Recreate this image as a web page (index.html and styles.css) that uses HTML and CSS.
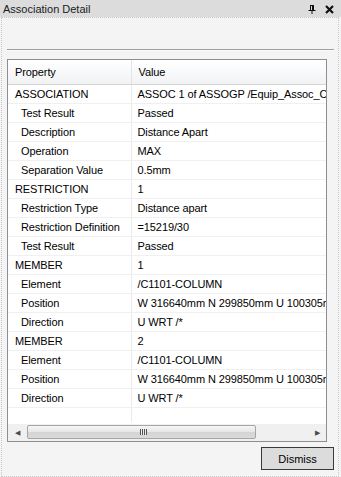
FILE: index.html
```html
<!DOCTYPE html>
<html lang="en">
<head>
    <meta charset="UTF-8">
    <meta name="viewport" content="width=device-width, initial-scale=1.0">
    <title>Association Detail</title>
    <link rel="stylesheet" href="styles.css">
</head>
<body>
    <div class="dock">
        <div class="titlebar">
            <span class="title">Association Detail</span>
            <span class="tools">
                <!-- pin -->
                <svg width="8" height="9" viewBox="0 0 8 9">
                    <path d="M2 0.5h4M2.5 0.5v5M5.5 0.5v5M4.5 0.5v5M0.5 5.5h7M4 5.5v3.5" stroke="#111" stroke-width="1" fill="none"/>
                </svg>
                <!-- close -->
                <svg width="9" height="9" viewBox="0 0 9 9">
                    <path d="M1 1L8 8M8 1L1 8" stroke="#111" stroke-width="2.2" fill="none"/>
                </svg>
            </span>
        </div>

        <div class="panel">
            <div class="spacer"></div>
            <div class="divider"></div>

            <div class="grid">
                <div class="grid-body">
                    <table class="props">
                        <colgroup>
                            <col class="col-prop">
                            <col class="col-value">
                        </colgroup>
                        <thead>
                            <tr><th>Property</th><th>Value</th></tr>
                        </thead>
                        <tbody>
                            <tr><td>ASSOCIATION</td><td>ASSOC 1 of ASSOGP /Equip_Assoc_Clearance</td></tr>
                            <tr><td class="sub">Test Result</td><td>Passed</td></tr>
                            <tr><td class="sub">Description</td><td>Distance Apart</td></tr>
                            <tr><td class="sub">Operation</td><td>MAX</td></tr>
                            <tr><td class="sub">Separation Value</td><td>0.5mm</td></tr>
                            <tr><td>RESTRICTION</td><td>1</td></tr>
                            <tr><td class="sub">Restriction Type</td><td>Distance apart</td></tr>
                            <tr><td class="sub">Restriction Definition</td><td>=15219/30</td></tr>
                            <tr><td class="sub">Test Result</td><td>Passed</td></tr>
                            <tr><td>MEMBER</td><td>1</td></tr>
                            <tr><td class="sub">Element</td><td>/C1101-COLUMN</td></tr>
                            <tr><td class="sub">Position</td><td>W 316640mm N 299850mm U 100305mm</td></tr>
                            <tr><td class="sub">Direction</td><td>U WRT /*</td></tr>
                            <tr><td>MEMBER</td><td>2</td></tr>
                            <tr><td class="sub">Element</td><td>/C1101-COLUMN</td></tr>
                            <tr><td class="sub">Position</td><td>W 316640mm N 299850mm U 100305mm</td></tr>
                            <tr><td class="sub">Direction</td><td>U WRT /*</td></tr>
                            <tr class="filler"><td></td><td></td></tr>
                        </tbody>
                    </table>
                </div>

                <div class="hscroll">
                    <span class="arrow">&#9664;</span>
                    <div class="track">
                        <div class="thumb"><span class="grip"></span></div>
                    </div>
                    <span class="arrow">&#9654;</span>
                </div>
            </div>

            <div class="actions">
                <button class="btn">Dismiss</button>
            </div>
        </div>
    </div>
</body>
</html>
```

FILE: styles.css
```css
body {
    margin: 0;
    background-color: #f4f4f4;
    font-family: "Liberation Sans", Arial, sans-serif;
    font-size: 11px;
    color: #000;
}

.dock {
    width: 341px;
    height: 477px;
    display: flex;
    flex-direction: column;
}

.titlebar {
    height: 17px;
    background-color: #dcdcdc;
    display: flex;
    align-items: center;
    justify-content: space-between;
    padding: 0 7px 0 3px;
    font-size: 11px;
    color: #1a1a1a;
}

.tools {
    display: flex;
    align-items: center;
    gap: 9px;
    padding-top: 1px;
}

.tools svg {
    display: block;
}

.panel {
    flex: 1;
    border: 1px dotted #c8c8c8;
    margin: 0 2px 0 1px;
    padding: 0 4px 0 5px;
    display: flex;
    flex-direction: column;
}

.spacer {
    height: 31px;
}

.divider {
    height: 1px;
    background-color: #a0a0a0;
    border-bottom: 1px solid #fafafa;
}

.grid {
    margin-top: 8px;
    width: 318px;
    height: 381px;
    border: 1px solid #8c8e94;
    background-color: #fff;
    display: flex;
    flex-direction: column;
    overflow: hidden;
}

.grid-body {
    flex: 1;
    overflow: hidden;
}

.props {
    border-collapse: collapse;
    table-layout: fixed;
    width: 430px;
    letter-spacing: -0.1px;
}

.col-prop {
    width: 123px;
}

.props th,
.props td {
    white-space: nowrap;
    overflow: hidden;
    text-align: left;
    font-weight: normal;
    padding: 0 0 0 6px;
}

.props th {
    height: 24px;
    background: linear-gradient(#ffffff, #f1f2f4);
    border-bottom: 1px solid #d5d5d5;
    border-right: 1px solid #e3e4e6;
    padding-left: 7px;
}

.props td {
    height: 18px;
    border-bottom: 1px solid #f0f0f0;
    border-right: 1px solid #ebebeb;
}

.props td:first-child {
    padding-left: 7px;
}

.props td.sub {
    padding-left: 13px;
}

.props .filler td {
    height: 14px;
    border-bottom: none;
}

.hscroll {
    height: 17px;
    display: flex;
    align-items: center;
    background-color: #f0f0f0;
}

.arrow {
    width: 18px;
    font-size: 7px;
    color: #4a4a4a;
    text-align: center;
}

.track {
    flex: 1;
    height: 15px;
}

.thumb {
    width: 229px;
    height: 14px;
    margin-left: 1px;
    border: 1px solid #a6a6a6;
    border-radius: 2px;
    background: linear-gradient(#f6f6f6, #e6e6e6 50%, #d4d4d4 51%, #dadada);
    display: flex;
    align-items: center;
    justify-content: center;
    box-sizing: border-box;
}

.grip {
    width: 7px;
    height: 6px;
    background: repeating-linear-gradient(90deg, #555 0 1px, #e8e8e8 1px 2px);
    margin-left: 3px;
}

.actions {
    display: flex;
    justify-content: flex-end;
    padding-top: 5px;
}

.btn {
    width: 73px;
    height: 23px;
    border: 1px solid #3a3a3a;
    background-color: #dcdcdc;
    font-family: "Liberation Sans", Arial, sans-serif;
    font-size: 11px;
    color: #000;
    padding: 0;
}
```
